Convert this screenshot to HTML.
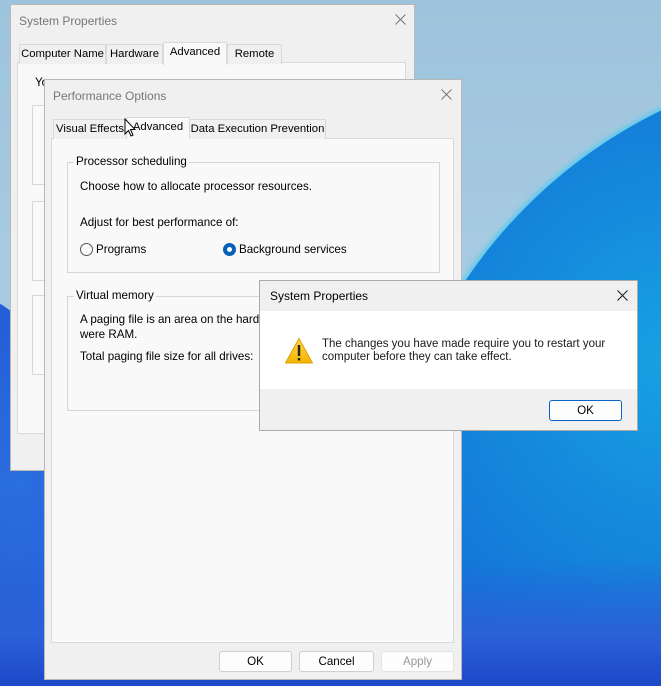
<!DOCTYPE html>
<html style="width:661px;height:686px;overflow:hidden"><head><style>
*{box-sizing:border-box;margin:0;padding:0}
html,body{width:661px;height:686px;overflow:hidden}
body{position:relative;font-family:"Liberation Sans",sans-serif;font-size:11.6px;color:#000;background:#a6c9e0}
.bg{position:absolute;left:0;top:0;width:661px;height:686px;overflow:hidden;background:linear-gradient(180deg,#9ec3dc 0%,#a6cbe2 40%,#b4d4e8 100%)}
.abs{position:absolute}
.blob{position:absolute;left:380px;top:60px;width:1000px;height:1000px;border-radius:50%;
background:radial-gradient(circle at 30% 30%,#17a2e2 0%,#1378d8 30%,#1a4fc8 55%,#1a2fa8 100%);box-shadow:-2px -2px 5px #5ccbee}
.blob2{position:absolute;left:-430px;top:260px;width:560px;height:560px;border-radius:50%;background:radial-gradient(circle at 80% 40%,#2a6ee0,#1838c0)}
.blob3{position:absolute;left:0;top:560px;width:661px;height:126px;background:linear-gradient(180deg,rgba(30,72,200,0) 0%,#2a60d8 60%,#1e48c8 100%)}
.win{position:absolute;background:#f0f0f0;border:1px solid #b8b8b8}
.title{position:absolute;left:8px;font-size:12px}
.x{position:absolute;width:11px;height:11px}
.tab{position:absolute;height:20px;border:1px solid #d9d9d9;border-bottom:none;background:#f0f0f0;padding:3px 0 0;text-align:center;white-space:nowrap;overflow:hidden;font-size:11.3px}
.panel{position:absolute;background:#f9f9f9;border:1px solid #dadada}
.grp{position:absolute;border:1px solid #d5d5d5}
.lg{position:absolute;top:-8px;left:6px;background:#f9f9f9;padding:0 2px}
.btn{position:absolute;height:21px;background:#fdfdfd;border:1px solid #cfcfcf;border-radius:3px;text-align:center;line-height:19px}
</style></head><body>
<div class="bg"><div class="blob"></div><div class="blob2"></div><div class="blob3"></div></div>

<div class="win" style="left:10px;top:4px;width:405px;height:467px">
 <div class="title" style="top:9px;color:#777">System Properties</div>
 <svg class="x" style="left:384px;top:9px" viewBox="0 0 11 11"><path d="M0.5 0.5L10.5 10.5M10.5 0.5L0.5 10.5" stroke="#777" stroke-width="1"/></svg>
 <div class="panel" style="left:6px;top:57px;width:389px;height:372px"></div>
 <div class="tab" style="left:8px;top:39px;width:87px">Computer Name</div>
 <div class="tab" style="left:95px;top:39px;width:57px">Hardware</div>
 <div class="tab" style="left:152px;top:37px;width:64px;height:23px;background:#f9f9f9">Advanced</div>
 <div class="tab" style="left:216px;top:39px;width:55px">Remote</div>
 <div class="abs" style="left:24px;top:71px">Yo</div>
 <div class="grp" style="left:21px;top:100px;width:30px;height:80px;border-right:none"></div>
 <div class="grp" style="left:21px;top:196px;width:30px;height:80px;border-right:none"></div>
 <div class="grp" style="left:21px;top:290px;width:30px;height:80px;border-right:none"></div>
</div>

<div class="win" style="left:44px;top:79px;width:418px;height:601px">
 <div class="title" style="top:9px;color:#777">Performance Options</div>
 <svg class="x" style="left:396px;top:9px" viewBox="0 0 11 11"><path d="M0.5 0.5L10.5 10.5M10.5 0.5L0.5 10.5" stroke="#777" stroke-width="1"/></svg>
 <div class="panel" style="left:6px;top:58px;width:403px;height:505px"></div>
 <div class="tab" style="left:8px;top:39px;width:74px">Visual Effects</div>
 <div class="tab" style="left:81px;top:37px;width:64px;height:22px;background:#f9f9f9">Advanced</div>
 <div class="tab" style="left:144px;top:39px;width:137px">Data Execution Prevention</div>
 <div class="grp" style="left:22px;top:82px;width:373px;height:111px">
  <div class="lg">Processor scheduling</div>
  <div class="abs" style="left:12px;top:17px">Choose how to allocate processor resources.</div>
  <div class="abs" style="left:12px;top:53px">Adjust for best performance of:</div>
  <div class="abs" style="left:12px;top:80px;width:13px;height:13px;border:1px solid #555;border-radius:50%"></div>
  <div class="abs" style="left:28px;top:80px">Programs</div>
  <div class="abs" style="left:155px;top:80px;width:13px;height:13px;border:4px solid #0560b8;border-radius:50%;background:#fff"></div>
  <div class="abs" style="left:171px;top:80px">Background services</div>
 </div>
 <div class="grp" style="left:22px;top:216px;width:373px;height:115px">
  <div class="lg">Virtual memory</div>
  <div class="abs" style="left:12px;top:15px;line-height:15px">A paging file is an area on the hard<br>were RAM.</div>
  <div class="abs" style="left:12px;top:53px">Total paging file size for all drives:</div>
 </div>
 <div class="btn" style="left:174px;top:571px;width:73px">OK</div>
 <div class="btn" style="left:254px;top:571px;width:75px">Cancel</div>
 <div class="btn" style="left:336px;top:571px;width:73px;color:#999;border-color:#e3e3e3">Apply</div>
</div>

<svg class="abs" style="left:124px;top:118px" width="12" height="20" viewBox="0 0 12 20"><path d="M1 1 L1 16 L4.5 12.5 L7 18 L9 17 L6.5 11.5 L11 11.5 Z" fill="#fff" stroke="#000" stroke-width="1"/></svg>

<div class="win" style="left:259px;top:280px;width:379px;height:151px;border-color:#aaa">
 <div class="abs" style="left:0;top:0;width:377px;height:30px;background:#f0f0f0"></div>
 <div class="title" style="top:8px;left:10px;color:#000">System Properties</div>
 <svg class="x" style="left:357px;top:9px" viewBox="0 0 11 11"><path d="M0.5 0.5L10.5 10.5M10.5 0.5L0.5 10.5" stroke="#222" stroke-width="1.1"/></svg>
 <div class="abs" style="left:0;top:30px;width:377px;height:78px;background:#fff"></div>
 <svg class="abs" style="left:24px;top:56px" width="30" height="28" viewBox="0 0 30 28"><defs><linearGradient id="g" x1="0" y1="0" x2="0" y2="1"><stop offset="0" stop-color="#ffd84a"/><stop offset="1" stop-color="#f5b400"/></linearGradient></defs><path d="M15 1.5 L28.5 26 L1.5 26 Z" fill="url(#g)" stroke="#e0a000" stroke-linejoin="round"/><rect x="13.8" y="8" width="2.4" height="11" fill="#222"/><rect x="13.8" y="21" width="2.4" height="2.4" fill="#222"/></svg>
 <div class="abs" style="left:62px;top:57px;font-size:11.5px;line-height:13px;color:#1a1a1a">The changes you have made require you to restart your<br>computer before they can take effect.</div>
 <div class="btn" style="left:289px;top:119px;width:73px;border:1px solid #0a64c8;height:21px">OK</div>
</div>
</body></html>
